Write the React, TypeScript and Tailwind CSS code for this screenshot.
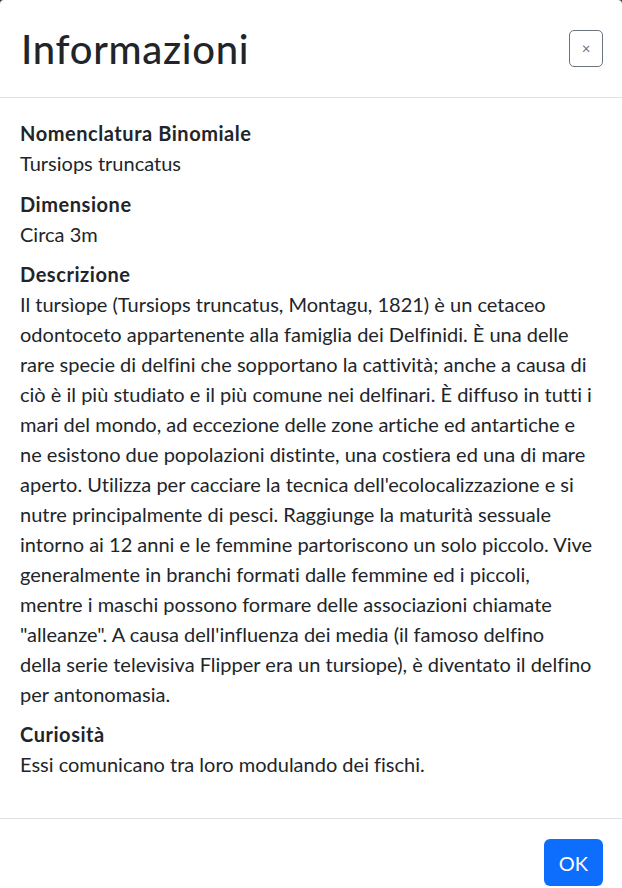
import React from "react";

const lines = [
  "Il tursìope (Tursiops truncatus, Montagu, 1821) è un cetaceo",
  "odontoceto appartenente alla famiglia dei Delfinidi. È una delle",
  "rare specie di delfini che sopportano la cattività; anche a causa di",
  "ciò è il più studiato e il più comune nei delfinari. È diffuso in tutti i",
  "mari del mondo, ad eccezione delle zone artiche ed antartiche e",
  "ne esistono due popolazioni distinte, una costiera ed una di mare",
  "aperto. Utilizza per cacciare la tecnica dell'ecolocalizzazione e si",
  "nutre principalmente di pesci. Raggiunge la maturità sessuale",
  "intorno ai 12 anni e le femmine partoriscono un solo piccolo. Vive",
  "generalmente in branchi formati dalle femmine ed i piccoli,",
  "mentre i maschi possono formare delle associazioni chiamate",
  "\"alleanze\". A causa dell'influenza dei media (il famoso delfino",
  "della serie televisiva Flipper era un tursiope), è diventato il delfino",
  "per antonomasia.",
];

export default function App() {
  return (
    <div
      className="w-[622px] h-[888px] overflow-hidden bg-[#3a3a3a] text-[#212529] [font-variant-ligatures:none]"
      style={{ fontFamily: 'Lato, "Open Sans", sans-serif' }}
    >
      <div className="bg-white rounded-t-[4px] h-full flex flex-col">
        <div className="h-[98px] flex items-center justify-between pl-5 pr-[19px] border-b border-[#dee2e6]">
          <h1 className="text-[40px] font-medium leading-[1.2] tracking-[0.7px] pl-px">Informazioni</h1>
          <button className="w-[34px] h-[37px] border border-[#6c757d] rounded-[5px] flex items-center justify-center text-[#6c757d] text-[15px] leading-none">
            ×
          </button>
        </div>
        <div className="px-5 pt-5 pb-5 text-[20px] leading-[30px]">
          <div className="font-bold tracking-[0.55px]">Nomenclatura Binomiale</div>
          <p className="mb-[11px]">Tursiops truncatus</p>
          <div className="font-bold tracking-[0.55px]">Dimensione</div>
          <p className="mb-[10px]">Circa 3m</p>
          <div className="font-bold tracking-[0.55px]">Descrizione</div>
          <p className="mb-[10px]">
            {lines.map((l, i) => (
              <span key={i} className="block whitespace-nowrap">
                {l}
              </span>
            ))}
          </p>
          <div className="font-bold tracking-[0.55px]">Curiosità</div>
          <p className="mb-[19px]">Essi comunicano tra loro modulando dei fischi.</p>
        </div>
        <div className="border-t border-[#dee2e6] flex justify-end px-[19px] pt-5">
          <button className="w-[59px] h-[47px] bg-[#0d6efd] text-white text-[20px] rounded-[6px]">OK</button>
        </div>
      </div>
    </div>
  );
}
